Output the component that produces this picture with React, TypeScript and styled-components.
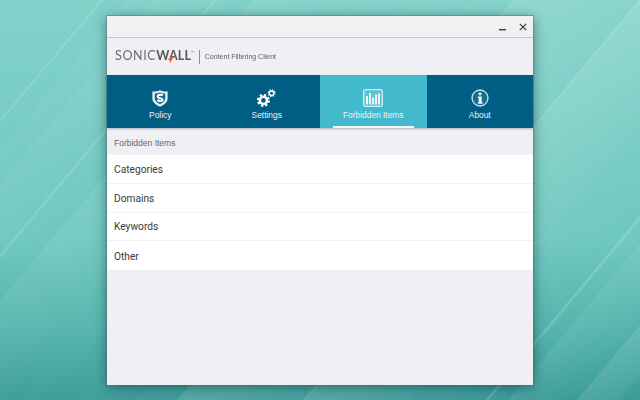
import styled, { createGlobalStyle } from "styled-components";

const GlobalStyle = createGlobalStyle`
  html, body {
    margin: 0;
    padding: 0;
    width: 640px;
    height: 400px;
    overflow: hidden;
    font-family: "Liberation Sans", Arial, sans-serif;
  }
`;

const ShieldIcon = () => (
  <svg width="16" height="17" viewBox="0 0 16 17">
    <path d="M8 .3 C10.6 1.5 13 1.8 15.6 1.5 V8.6 C15.6 12.4 12.2 15 8 16.8 C3.8 15 .4 12.4 .4 8.6 V1.5 C3 1.8 5.4 1.5 8 .3Z" fill="#e4eff3" />
    <path d="M8 2.5 C10 3.2 11.6 3.5 13.2 3.4 V8.6 C13.2 11 10.8 13 8 14.3 C5.2 13 2.8 11 2.8 8.6 V3.4 C4.4 3.5 6 3.2 8 2.5Z" fill="#0a6488" />
    <path d="M10.8 5.5 C10 4.8 9 4.6 8 4.7 C6.5 4.9 5.5 5.6 5.7 6.8 C6 8.7 10.5 8 10.6 9.8 C10.7 11.1 7.4 11.7 5.3 10.2" fill="none" stroke="#fff" strokeWidth="2.1" />
  </svg>
);

const GearsIcon = () => (
  <svg width="19" height="18" viewBox="0 0 19 18">
    <circle cx="6.4" cy="11.4" r="3.6" fill="none" stroke="#fff" strokeWidth="2.6" />
    <circle cx="6.4" cy="11.4" r="5.5" fill="none" stroke="#fff" strokeWidth="2" strokeDasharray="2.3 2" />
    <circle cx="14.6" cy="4.2" r="2.2" fill="none" stroke="#fff" strokeWidth="1.4" />
    <circle cx="14.6" cy="4.2" r="3.4" fill="none" stroke="#fff" strokeWidth="1.2" strokeDasharray="1.4 1.27" />
  </svg>
);

const ChartIcon = () => (
  <svg width="20" height="18" viewBox="0 0 20 18">
    <rect x=".7" y=".7" width="18.6" height="16.6" rx="1.5" fill="rgba(255,255,255,.14)" stroke="#d3f0f4" strokeWidth="1.3" />
    <g fill="#eaf8fa">
      <rect x="3" y="7" width="2" height="8.5" />
      <rect x="6" y="4" width="2" height="11.5" />
      <rect x="9" y="8.5" width="2" height="7" />
      <rect x="12" y="5.5" width="2" height="10" />
      <rect x="15" y="4.5" width="2" height="11" />
    </g>
  </svg>
);

const InfoIcon = () => (
  <svg width="18" height="18" viewBox="0 0 18 18">
    <circle cx="9" cy="9" r="8" fill="rgba(255,255,255,.1)" stroke="#cfe2ea" strokeWidth="1.3" />
    <circle cx="9" cy="4.8" r="1.6" fill="#f2f7f9" />
    <path d="M6.9 7.4 H10.7 V13.2 H11.5 V14.8 H6.9 V13.2 H7.7 V9 H6.9Z" fill="#f2f7f9" />
  </svg>
);

const MinimizeIcon = () => (
  <svg width="8" height="8" viewBox="0 0 8 8">
    <rect x="0" y="6" width="7" height="1.4" fill="#3a3a3a" />
  </svg>
);

const CloseIcon = () => (
  <svg width="8" height="8" viewBox="0 0 8 8">
    <path d="M.8 .8 L7.2 7.2 M7.2 .8 L.8 7.2" stroke="#3a3a3a" strokeWidth="1.2" />
  </svg>
);

const tabs = [
  { label: "Policy", icon: <ShieldIcon /> },
  { label: "Settings", icon: <GearsIcon /> },
  { label: "Forbidden Items", icon: <ChartIcon />, active: true },
  { label: "About", icon: <InfoIcon /> },
];

const rows = ["Categories", "Domains", "Keywords", "Other"];

export default function App() {
  return (
    <Desktop>
      <GlobalStyle />
      <Window>
        <TitleBar>
          <WindowButton><MinimizeIcon /></WindowButton>
          <WindowButton><CloseIcon /></WindowButton>
        </TitleBar>
        <Brand>
          <Logo>
            SONIC<b>WALL</b>
            <Swoosh width="9" height="8" viewBox="0 0 9 8">
              <path d="M8.6 .4 C5.6 .2 2.8 1.2 .4 3.8 L2.4 3.7 L3.4 7.8 C3.6 5.2 5.2 2.2 8.6 .4Z" fill="#e8672a" />
            </Swoosh>
            <Tm>™</Tm>
          </Logo>
          <Divider />
          <Product>Content Filtering Client</Product>
        </Brand>
        <Tabs>
          {tabs.map((tab) => (
            <Tab key={tab.label} $active={tab.active}>
              <TabIcon>{tab.icon}</TabIcon>
              <TabLabel>{tab.label}</TabLabel>
            </Tab>
          ))}
        </Tabs>
        <Content>
          <Heading>Forbidden Items</Heading>
          <List>
            {rows.map((row) => (
              <Row key={row}>{row}</Row>
            ))}
          </List>
        </Content>
      </Window>
    </Desktop>
  );
}

const w = (a: number) => `rgba(255,255,255,${a})`;

const Desktop = styled.div`
  width: 640px;
  height: 400px;
  box-sizing: border-box;
  padding-top: 16px;
  display: flex;
  justify-content: center;
  align-items: flex-start;
  background:
    linear-gradient(130deg,
      ${w(0)} 10.2%, ${w(0.14)} 10.4%, ${w(0)} 10.7%,
      ${w(0)} 12.95%, ${w(0.04)} 13%, ${w(0.01)} 15.75%,
      ${w(0.06)} 15.8%, ${w(0.02)} 21.8%, ${w(0.18)} 22%, ${w(0.02)} 22.3%,
      ${w(0)} 25.85%, ${w(0.07)} 25.9%, ${w(0.02)} 36.4%,
      ${w(0.03)} 36.5%, ${w(0.01)} 42.2%,
      ${w(0.03)} 42.3%, ${w(0.01)} 48.4%,
      ${w(0.03)} 48.5%, ${w(0.01)} 52.5%,
      ${w(0.14)} 52.6%, ${w(0.05)} 65.4%, ${w(0.22)} 65.6%,
      ${w(0.14)} 65.9%, ${w(0.05)} 76.4%,
      ${w(0.03)} 76.5%, ${w(0)} 84.1%, ${w(0.22)} 84.3%, ${w(0.02)} 84.6%,
      ${w(0)} 86.5%, ${w(0.07)} 86.6%, ${w(0)} 93.5%,
      ${w(0.11)} 93.6%, ${w(0.05)} 97.9%, ${w(0)} 98%),
    linear-gradient(180deg, #82d2ca 0%, #6fc8bf 60%, #55b4ad 82%, #3c9c99 100%);
`;

const Window = styled.div`
  width: 426px;
  height: 369px;
  display: flex;
  flex-direction: column;
  background: #efeff4;
  box-shadow: 0 0 0 1px rgba(70, 110, 110, 0.4), 0 2px 12px rgba(0, 40, 50, 0.55);
`;

const TitleBar = styled.div`
  height: 21px;
  flex: none;
  display: flex;
  justify-content: flex-end;
  align-items: center;
  gap: 12px;
  padding-right: 6px;
  background: #f1f1f4;
  border-bottom: 1px solid #c6c6c8;
`;

const WindowButton = styled.span`
  display: flex;
  width: 8px;
  height: 8px;
`;

const Brand = styled.div`
  height: 37px;
  flex: none;
  display: flex;
  align-items: center;
  padding-left: 8px;
`;

const Logo = styled.div`
  position: relative;
  font-family: Lato, "Liberation Sans", sans-serif;
  font-weight: 400;
  font-size: 12.5px;
  letter-spacing: 0.6px;
  color: #6a6d70;
  line-height: 1;
  will-change: opacity;
  b {
    color: #55575b;
    font-weight: 700;
    letter-spacing: 0.2px;
  }
`;

const Swoosh = styled.svg`
  position: absolute;
  left: 52px;
  top: 6px;
`;

const Tm = styled.span`
  font-size: 4px;
  vertical-align: 6px;
`;

const Divider = styled.span`
  width: 1px;
  height: 14px;
  margin: 0 5px 0 4px;
  background: #8b8e92;
`;

const Product = styled.span`
  font-size: 7px;
  color: #5f6266;
  will-change: opacity;
`;

const Tabs = styled.nav`
  height: 53px;
  flex: none;
  display: grid;
  grid-template-columns: repeat(4, 1fr);
  background: #005d84;
  box-shadow: 0 1px 2px rgba(60, 70, 90, 0.35);
  z-index: 1;
`;

const Tab = styled.div<{ $active?: boolean }>`
  position: relative;
  display: flex;
  flex-direction: column;
  align-items: center;
  background: ${(p) => (p.$active ? "#43b9cd" : "transparent")};
  &::after {
    content: "";
    display: ${(p) => (p.$active ? "block" : "none")};
    position: absolute;
    left: 13px;
    right: 13px;
    bottom: 0;
    height: 2px;
    background: #f4f6f8;
  }
`;

const TabIcon = styled.div`
  height: 20px;
  margin-top: 13px;
  display: flex;
  align-items: center;
  justify-content: center;
`;

const TabLabel = styled.span`
  font-size: 8.4px;
  line-height: 14px;
  color: #eaf3f6;
`;

const Content = styled.div`
  flex: 1;
  display: flex;
  flex-direction: column;
`;

const Heading = styled.div`
  height: 27px;
  box-sizing: border-box;
  padding: 9px 0 0 7px;
  font-size: 8.5px;
  line-height: 12px;
  color: #66666c;
`;

const List = styled.div`
  display: flex;
  flex-direction: column;
  background: #fff;
`;

const Row = styled.div`
  height: 28.75px;
  box-sizing: border-box;
  padding: 1px 0 0 7px;
  display: flex;
  align-items: center;
  font-family: Roboto, "Liberation Sans", sans-serif;
  font-size: 10.2px;
  color: #3a3a3c;
  border-bottom: 1px solid #f3f3f5;
  &:last-child {
    border-bottom: none;
  }
`;
